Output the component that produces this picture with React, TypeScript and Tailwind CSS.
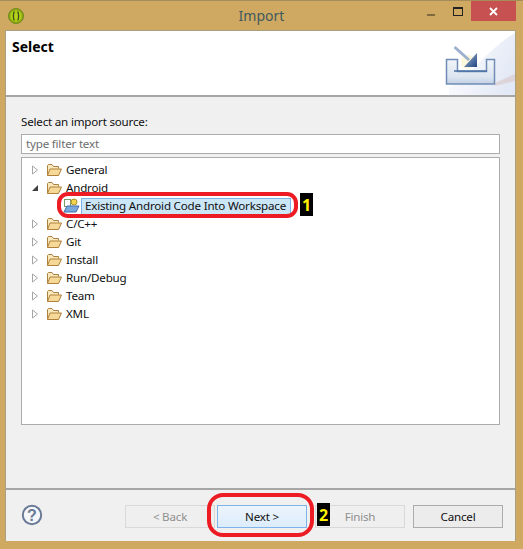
import React from 'react'

const uiFont = "[font-family:'Noto_Sans','Open_Sans',sans-serif]"

function FolderIcon() {
  return (
    <svg width="16" height="14" viewBox="0 0 16 14" className="shrink-0">
      <path d="M1.5 12.5V2.5L2.5 1.5H6L7.5 3.5H12.5V5.5" fill="#fbe9bd" stroke="#a8803f" />
      <path d="M1.5 12.5L4 6H15.5L12.5 12.5Z" fill="#f6d998" stroke="#b0813a" />
    </svg>
  )
}

function Chevron({ open }: { open?: boolean }) {
  if (open) {
    return (
      <svg width="8" height="8" viewBox="0 0 8 8" className="shrink-0">
        <path d="M1 7H7V1Z" fill="#404040" />
      </svg>
    )
  }
  return (
    <svg width="8" height="10" viewBox="0 0 8 10" className="shrink-0">
      <path d="M1.5 1L6.5 5L1.5 9Z" fill="#fff" stroke="#a6a6a6" />
    </svg>
  )
}

function TreeRow({ label, open }: { label: string; open?: boolean }) {
  return (
    <div className="flex h-[18px] items-center">
      <div className="flex w-[12px] justify-center">
        <Chevron open={open} />
      </div>
      <div className="ml-[5px] flex items-center">
        <FolderIcon />
      </div>
      <span className="ml-[4px] text-[11.6px] tracking-[-0.2px] text-[#101010]">{label}</span>
    </div>
  )
}

function Banner() {
  return (
    <svg width="70" height="64" viewBox="0 0 70 64" className="shrink-0">
      <defs>
        <linearGradient id="bannerBg" x1="0" y1="0.2" x2="1" y2="0.6">
          <stop offset="0" stopColor="#ffffff" />
          <stop offset="1" stopColor="#e2e8f5" />
        </linearGradient>
        <linearGradient id="tray" x1="0" y1="0" x2="0" y2="1">
          <stop offset="0" stopColor="#f2f5fa" />
          <stop offset="0.7" stopColor="#dde5f0" />
          <stop offset="1" stopColor="#c2d0e4" />
        </linearGradient>
        <linearGradient id="arrow" x1="0" y1="0" x2="1" y2="1">
          <stop offset="0" stopColor="#a9bbd6" />
          <stop offset="1" stopColor="#1f4483" />
        </linearGradient>
      </defs>
      <path d="M4 56C24 48 44 16 70 2V64H4Z" fill="url(#bannerBg)" />
      <path d="M50 52L70 43V50L50 55Z" fill="#d9c6c8" opacity="0.6" />
      <circle cx="23" cy="31" r="7" fill="#fbf8dc" />
      <path
        d="M1.5 28.5H12.5V40.5H41.5V28.5H49.5V53H1.5Z"
        fill="url(#tray)"
        stroke="#6f8db6"
        strokeWidth="1.5"
      />
      <path d="M9 40H42" stroke="#4a6fa5" strokeWidth="1.5" />
      <path d="M9.5 16L24 29" stroke="#9db1cf" strokeWidth="3" />
      <path d="M19 36L32 22V36Z" fill="url(#arrow)" />
    </svg>
  )
}

function DialogButton({
  label,
  variant = 'normal',
  className = '',
}: {
  label: string
  variant?: 'normal' | 'disabled' | 'focused'
  className?: string
}) {
  const styles = {
    normal: 'border-[#acacac] bg-[#ececec] text-[#101010]',
    disabled: 'border-[#d9d9d9] bg-[#efefef] text-[#8f8f8f]',
    focused: 'border-[#7eb4ea] bg-[linear-gradient(#ecf4fc,#dcecfc)] text-[#101010]',
  }
  return (
    <div
      className={`flex h-[23px] w-[90px] items-center justify-center border text-[11.6px] tracking-[-0.2px] ${styles[variant]} ${className}`}
    >
      {label}
    </div>
  )
}

export default function App() {
  return (
    <div className={`relative flex h-[549px] w-[523px] flex-col overflow-hidden bg-[#cfa961] ${uiFont}`}>
      {/* Title bar */}
      <div className="relative flex h-[30px] shrink-0 items-center justify-center border-t border-[#a58c5a]">
        <svg width="16" height="16" viewBox="0 0 16 16" className="absolute left-[8px] top-[7px]">
          <circle cx="8" cy="8" r="7.5" fill="#8fae10" stroke="#6d8520" />
          <circle cx="8" cy="8" r="5.5" fill="#b6d216" />
          <path d="M6.5 3.5C5 5 5 11 6.5 12.5M9.5 3.5C11 5 11 11 9.5 12.5" fill="none" stroke="#3a4a20" strokeWidth="1.3" />
        </svg>
        <span className="mb-[1px] text-[14px] text-[#3f5a5e]">Import</span>
        <div className="absolute left-[427px] top-[13px] h-[2px] w-[8px] bg-[#7f6a3f]" />
        <div className="absolute left-[453px] top-[6px] h-[9px] w-[10px] border border-t-[2px] border-[#222]" />
        <div className="absolute left-[471px] top-0 flex h-[20px] w-[45px] items-center justify-center bg-[#c75050]">
          <svg width="9" height="9" viewBox="0 0 9 9">
            <path d="M1 1L8 8M8 1L1 8" stroke="#fff" strokeWidth="1.8" />
          </svg>
        </div>
      </div>

      {/* Dialog body */}
      <div className="ml-[5px] flex h-[511px] w-[511px] flex-col border-x border-t border-[#a8a080] bg-[#f0f0f0]">
        <div className="flex h-[66px] shrink-0 justify-between border-b-2 border-[#a6a6a6] bg-white">
          <span className="ml-[6px] mt-[6px] text-[14px] leading-[20px] font-bold text-black">Select</span>
          <Banner />
        </div>

        <div className="flex h-[391px] shrink-0 flex-col px-[15px] pt-[16px]">
          <div className="text-[11.6px] leading-[17px] tracking-[-0.2px] text-[#101010]">Select an import source:</div>
          <div className="mt-[4px] flex h-[20px] w-[479px] items-center border border-[#acacac] bg-white pl-[4px] text-[11.6px] tracking-[-0.2px] text-[#6d6d6d]">
            type filter text
          </div>
          <div className="mt-[3px] h-[268px] w-[479px] border border-[#acacac] bg-white pl-[7px] pt-[3px]">
            <TreeRow label="General" />
            <TreeRow label="Android" open />
            <div className="flex h-[18px] items-center pl-[34px]">
              <svg width="18" height="16" viewBox="0 0 18 16" className="shrink-0">
                <rect x="1.5" y="1.5" width="6" height="7" fill="#fff" stroke="#7a9a6a" />
                <circle cx="11" cy="4" r="3" fill="#f3d44e" stroke="#a98f2a" />
                <path d="M1 14L4 8H16L13 14Z" fill="#7aa7dc" stroke="#3f6ea8" />
              </svg>
              <span className="flex h-[17px] w-[210px] items-center border border-[#7db4e8] bg-[#cbe6f7] pl-[3px] text-[11.6px] tracking-[-0.2px] whitespace-nowrap text-[#101010]">
                Existing Android Code Into Workspace
              </span>
            </div>
            <TreeRow label="C/C++" />
            <TreeRow label="Git" />
            <TreeRow label="Install" />
            <TreeRow label="Run/Debug" />
            <TreeRow label="Team" />
            <TreeRow label="XML" />
          </div>
        </div>

        <div className="flex flex-1 items-start border-t-2 border-[#a6a6a6] pl-[15px] pt-[15px]">
          <svg width="22" height="22" viewBox="0 0 22 22" className="mt-[-1px] shrink-0">
            <circle cx="11" cy="11" r="9.2" fill="#f4f6fa" stroke="#6a7a96" strokeWidth="2" />
            <text x="11" y="16.5" textAnchor="middle" fontSize="16" fontWeight="700" fill="#6a7a96" fontFamily="'Liberation Sans', sans-serif">?</text>
          </svg>
          <div className="ml-[82px] flex">
            <DialogButton label="< Back" variant="disabled" />
            <DialogButton label="Next >" variant="focused" className="ml-[2px]" />
            <DialogButton label="Finish" variant="disabled" className="ml-[8px]" />
            <DialogButton label="Cancel" className="ml-[8px]" />
          </div>
        </div>
      </div>

      {/* Red annotations drawn over the screenshot */}
      <div className="absolute left-[57px] top-[192px] h-[26px] w-[241px] rounded-[11px] border-[4px] border-[#ed1c24]" />
      <div className="absolute left-[300px] top-[193px] flex h-[23px] w-[13px] items-center justify-center bg-black text-[16px] font-bold text-[#fff200]">
        1
      </div>
      <div className="absolute left-[207px] top-[493px] h-[44px] w-[107px] rounded-[16px] border-[4px] border-[#ed1c24]" />
      <div className="absolute left-[317px] top-[503px] flex h-[23px] w-[13px] items-center justify-center bg-black text-[16px] font-bold text-[#fff200]">
        2
      </div>
    </div>
  )
}
